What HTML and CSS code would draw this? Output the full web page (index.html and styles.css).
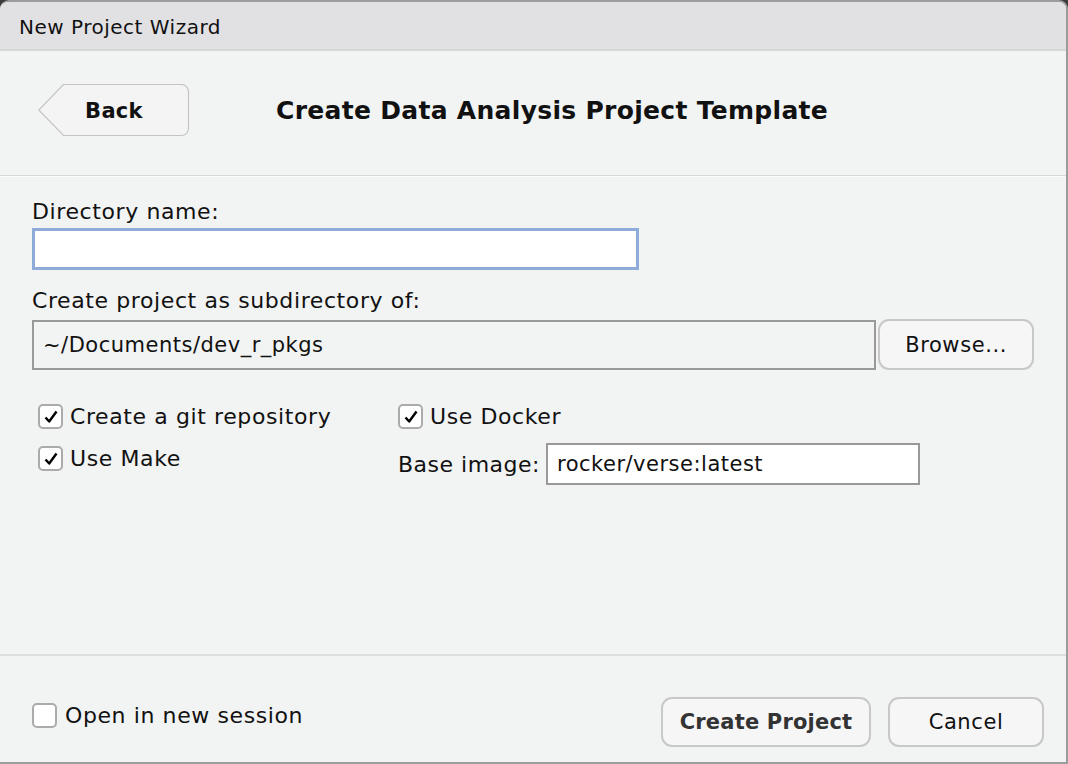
FILE: index.html
```html
<!DOCTYPE html>
<html>
<head>
<meta charset="utf-8">
<link rel="stylesheet" href="styles.css">
</head>
<body>
<div class="window">
  <div class="titlebar">New Project Wizard</div>
  <div class="header">
    <button class="back">
      <svg class="back-shape" width="152" height="53" viewBox="0 0 152 53"><path d="M25.5 0.5 H143.5 A7 7 0 0 1 150.5 7.5 V44.5 A7 7 0 0 1 143.5 51.5 H25.5 L0.8 26 Z" fill="#f4f4f5" stroke="#c4c4c6" stroke-width="1.2"/></svg>
      <span class="back-label">Back</span>
    </button>
    <h1 class="title">Create Data Analysis Project Template</h1>
  </div>
  <div class="content">
    <div class="label">Directory name:</div>
    <div class="input focus"></div>
    <div class="label second">Create project as subdirectory of:</div>
    <div class="pathrow">
      <div class="input path">~/Documents/dev_r_pkgs</div>
      <button class="btn browse">Browse...</button>
    </div>
    <div class="options">
      <div class="col">
        <label class="check"><span class="box checked"><svg width="18" height="18" viewBox="0 0 18 18"><path d="M3.5 9.5 L7.2 13.5 L14.5 3.5" fill="none" stroke="#000" stroke-width="2.4" stroke-linejoin="round"/></svg></span>Create a git repository</label>
        <label class="check"><span class="box checked"><svg width="18" height="18" viewBox="0 0 18 18"><path d="M3.5 9.5 L7.2 13.5 L14.5 3.5" fill="none" stroke="#000" stroke-width="2.4" stroke-linejoin="round"/></svg></span>Use Make</label>
      </div>
      <div class="col">
        <label class="check"><span class="box checked"><svg width="18" height="18" viewBox="0 0 18 18"><path d="M3.5 9.5 L7.2 13.5 L14.5 3.5" fill="none" stroke="#000" stroke-width="2.4" stroke-linejoin="round"/></svg></span>Use Docker</label>
        <div class="baserow"><span class="baselabel">Base image:</span><div class="input base">rocker/verse:latest</div></div>
      </div>
    </div>
  </div>
  <div class="footer">
    <label class="check session"><span class="box"></span>Open in new session</label>
    <div class="actions">
      <button class="btn create">Create Project</button>
      <button class="btn cancel">Cancel</button>
    </div>
  </div>
</div>
</body>
</html>
```

FILE: styles.css
```css
* { box-sizing: border-box; }
html, body { margin: 0; padding: 0; }
body {
  background: #3b3b3b;
  width: 1068px;
  height: 764px;
  overflow: hidden;
  font-family: "DejaVu Sans", "Liberation Sans", sans-serif;
  color: #111;
}
.window {
  width: 1068px;
  height: 764px;
  background: #f2f3f3;
  border-top: 2px solid #9c9c9c;
  border-right: 2px solid #9c9c9c;
  border-bottom: 2px solid #9c9c9c;
  border-radius: 9px 9px 0 0;
  overflow: hidden;
  display: flex;
  flex-direction: column;
}
.titlebar {
  height: 49px;
  background: #e1e1e4;
  border-bottom: 2px solid #d6d6d9;
  padding: 3px 0 0 19px;
  display: flex;
  align-items: center;
  font-size: 20px;
  letter-spacing: 0.5px;
  color: #111;
}
.header {
  height: 125px;
  display: flex;
  align-items: center;
  padding: 0 0 5px 38px;
  gap: 86px;
  border-bottom: 1px solid #d8d8d8;
  box-shadow: 0 1px 0 #fbfbfb;
}
.back {
  position: relative;
  width: 152px;
  height: 53px;
  padding: 0;
  border: 0;
  background: transparent;
  font-family: inherit;
}
.back-shape { position: absolute; left: 0; top: 0; }
.back-label {
  position: relative;
  display: block;
  text-align: center;
  font-size: 21px;
  font-weight: bold;
  letter-spacing: 0.3px;
  color: #111;
}
.title {
  margin: 0;
  font-size: 25px;
  font-weight: bold;
  letter-spacing: 0.3px;
  color: #111;
}
.content {
  flex: 1;
  padding: 22px 32px 0 32px;
}
.label {
  font-size: 22px;
  letter-spacing: 0.6px;
  line-height: 28px;
  height: 30px;
}
.label.second { margin-top: 17px; }
.input {
  background: #fff;
  border: 2px solid #999;
  font-size: 21px;
  letter-spacing: 0.5px;
}
.input.focus {
  width: 607px;
  height: 42px;
  border: 3px solid #8eabd9;
}
.pathrow {
  display: flex;
  align-items: center;
  gap: 2px;
  margin-top: 2px;
}
.input.path {
  width: 845px;
  height: 50px;
  background: #f2f3f3;
  padding-left: 9px;
  display: flex;
  align-items: center;
}
.btn {
  font-family: inherit;
  font-size: 21px;
  letter-spacing: 0.6px;
  color: #111;
  background: #f6f6f7;
  border: 2px solid #c8c8c9;
  border-radius: 11px;
  padding: 0;
}
.browse { width: 156px; height: 51px; }
.options {
  display: flex;
  margin-top: 34px;
  padding-left: 6px;
}
.col { display: flex; flex-direction: column; gap: 17px; }
.col:first-child { width: 360px; }
.check {
  display: flex;
  align-items: center;
  gap: 7px;
  font-size: 22px;
  letter-spacing: 0.6px;
  height: 25px;
}
.box {
  flex: none;
  width: 25px;
  height: 25px;
  border: 2px solid #ababab;
  border-radius: 5px;
  background: #fff;
  display: flex;
  align-items: center;
  justify-content: center;
}
.baserow { display: flex; align-items: center; gap: 6px; margin-top: -3px; }
.baselabel { font-size: 22px; letter-spacing: 0.5px; }
.input.base {
  width: 374px;
  height: 42px;
  padding-left: 9px;
  display: flex;
  align-items: center;
}
.footer {
  height: 108px;
  border-top: 2px solid #dedede;
  display: flex;
  align-items: center;
  justify-content: space-between;
  padding: 0 22px 0 32px;
}
.session { gap: 8px; margin-top: 12px; }
.actions { display: flex; gap: 17px; margin-top: 26px; }
.create { width: 210px; height: 50px; font-weight: bold; color: #333; letter-spacing: 0.2px; }
.cancel { width: 156px; height: 50px; }
```
